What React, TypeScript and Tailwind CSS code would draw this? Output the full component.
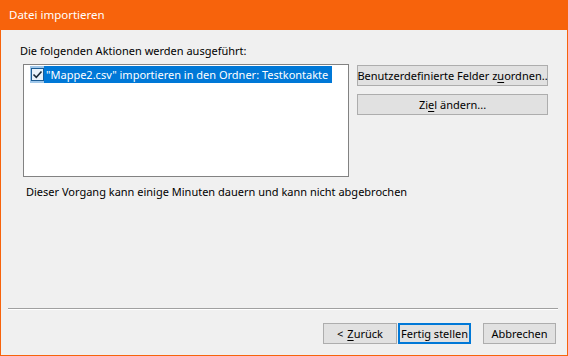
import React from 'react';

const font = { fontFamily: '"Noto Sans", "Open Sans", sans-serif' };

const WinButton: React.FC<{ className?: string; primary?: boolean; children: React.ReactNode }> = ({
    className,
    primary,
    children,
}) => (
    <div
        className={`flex h-[21px] items-center justify-center whitespace-nowrap bg-[#e1e1e1] text-[11px] leading-none text-black ${
            primary ? 'border-2 border-[#0078d7]' : 'border border-[#adadad]'
        } ${className ?? ''}`}
    >
        {children}
    </div>
);

const CheckBox: React.FC = () => (
    <div className="flex h-[17px] w-[14px] items-center justify-center bg-[#9fc7ea]">
        <div className="flex h-[13px] w-[13px] items-center justify-center border border-[#1c5c94] bg-[#e8f2fb]">
            <svg width="11" height="11" viewBox="0 0 11 11">
                <path d="M1.5 5.5 L4.3 8.3 L9.5 2.5" fill="none" stroke="#1a2b3c" strokeWidth="1.6" />
            </svg>
        </div>
    </div>
);

export default function App() {
    return (
        <div
            className="flex h-[356px] w-[568px] flex-col border-x border-b border-[#f7630c] bg-[#f0f0f0]"
            style={font}
        >
            {/* title bar */}
            <div className="-mx-px flex h-[30px] shrink-0 items-center bg-[#f7630c] pl-[9px] text-[11.5px] text-white">
                Datei importieren
            </div>

            <div className="flex flex-1 flex-col">
                <div className="whitespace-nowrap pl-[19px] pt-[13px] text-[11px] leading-[16px] text-black">
                    Die folgenden Aktionen werden ausgeführt:
                </div>

                <div className="mt-[5px] flex items-start gap-[8px] pl-[22px]">
                    <div className="h-[113px] w-[326px] border border-[#828282] bg-white pl-[6px] pt-[1px]">
                        <div className="flex items-center">
                            <CheckBox />
                            <div className="flex h-[17px] items-center whitespace-nowrap bg-[#0078d7] pl-[2px] pr-[4px] text-[11px] leading-none text-white">
                                "Mappe2.csv" importieren in den Ordner: Testkontakte
                            </div>
                        </div>
                    </div>
                    <div className="mt-px flex w-[191px] flex-col gap-[8px]">
                        <WinButton>
                            Benutzerdefinierte Felder z<u className="underline-offset-2">u</u>ordnen..
                        </WinButton>
                        <WinButton>
                            Zi<u className="underline-offset-2">e</u>l ändern...
                        </WinButton>
                    </div>
                </div>

                <div className="whitespace-nowrap pl-[25px] pt-[7px] text-[11px] leading-[16px] text-black">
                    Dieser Vorgang kann einige Minuten dauern und kann nicht abgebrochen
                </div>

                <div className="flex-1" />

                <div className="ml-[7px] mr-[9px] border-t border-b border-t-[#a0a0a0] border-b-white" />

                <div className="flex items-center pb-[11px] pl-[322px] pt-[13px]">
                    <WinButton className="w-[74px]">
                        &lt;<u className="ml-[4px] underline-offset-2">Z</u>urück
                    </WinButton>
                    <WinButton primary className="ml-[1px] w-[73px]">
                        Fertig stellen
                    </WinButton>
                    <WinButton className="ml-[12px] w-[73px]">Abbrechen</WinButton>
                </div>
            </div>
        </div>
    );
}
